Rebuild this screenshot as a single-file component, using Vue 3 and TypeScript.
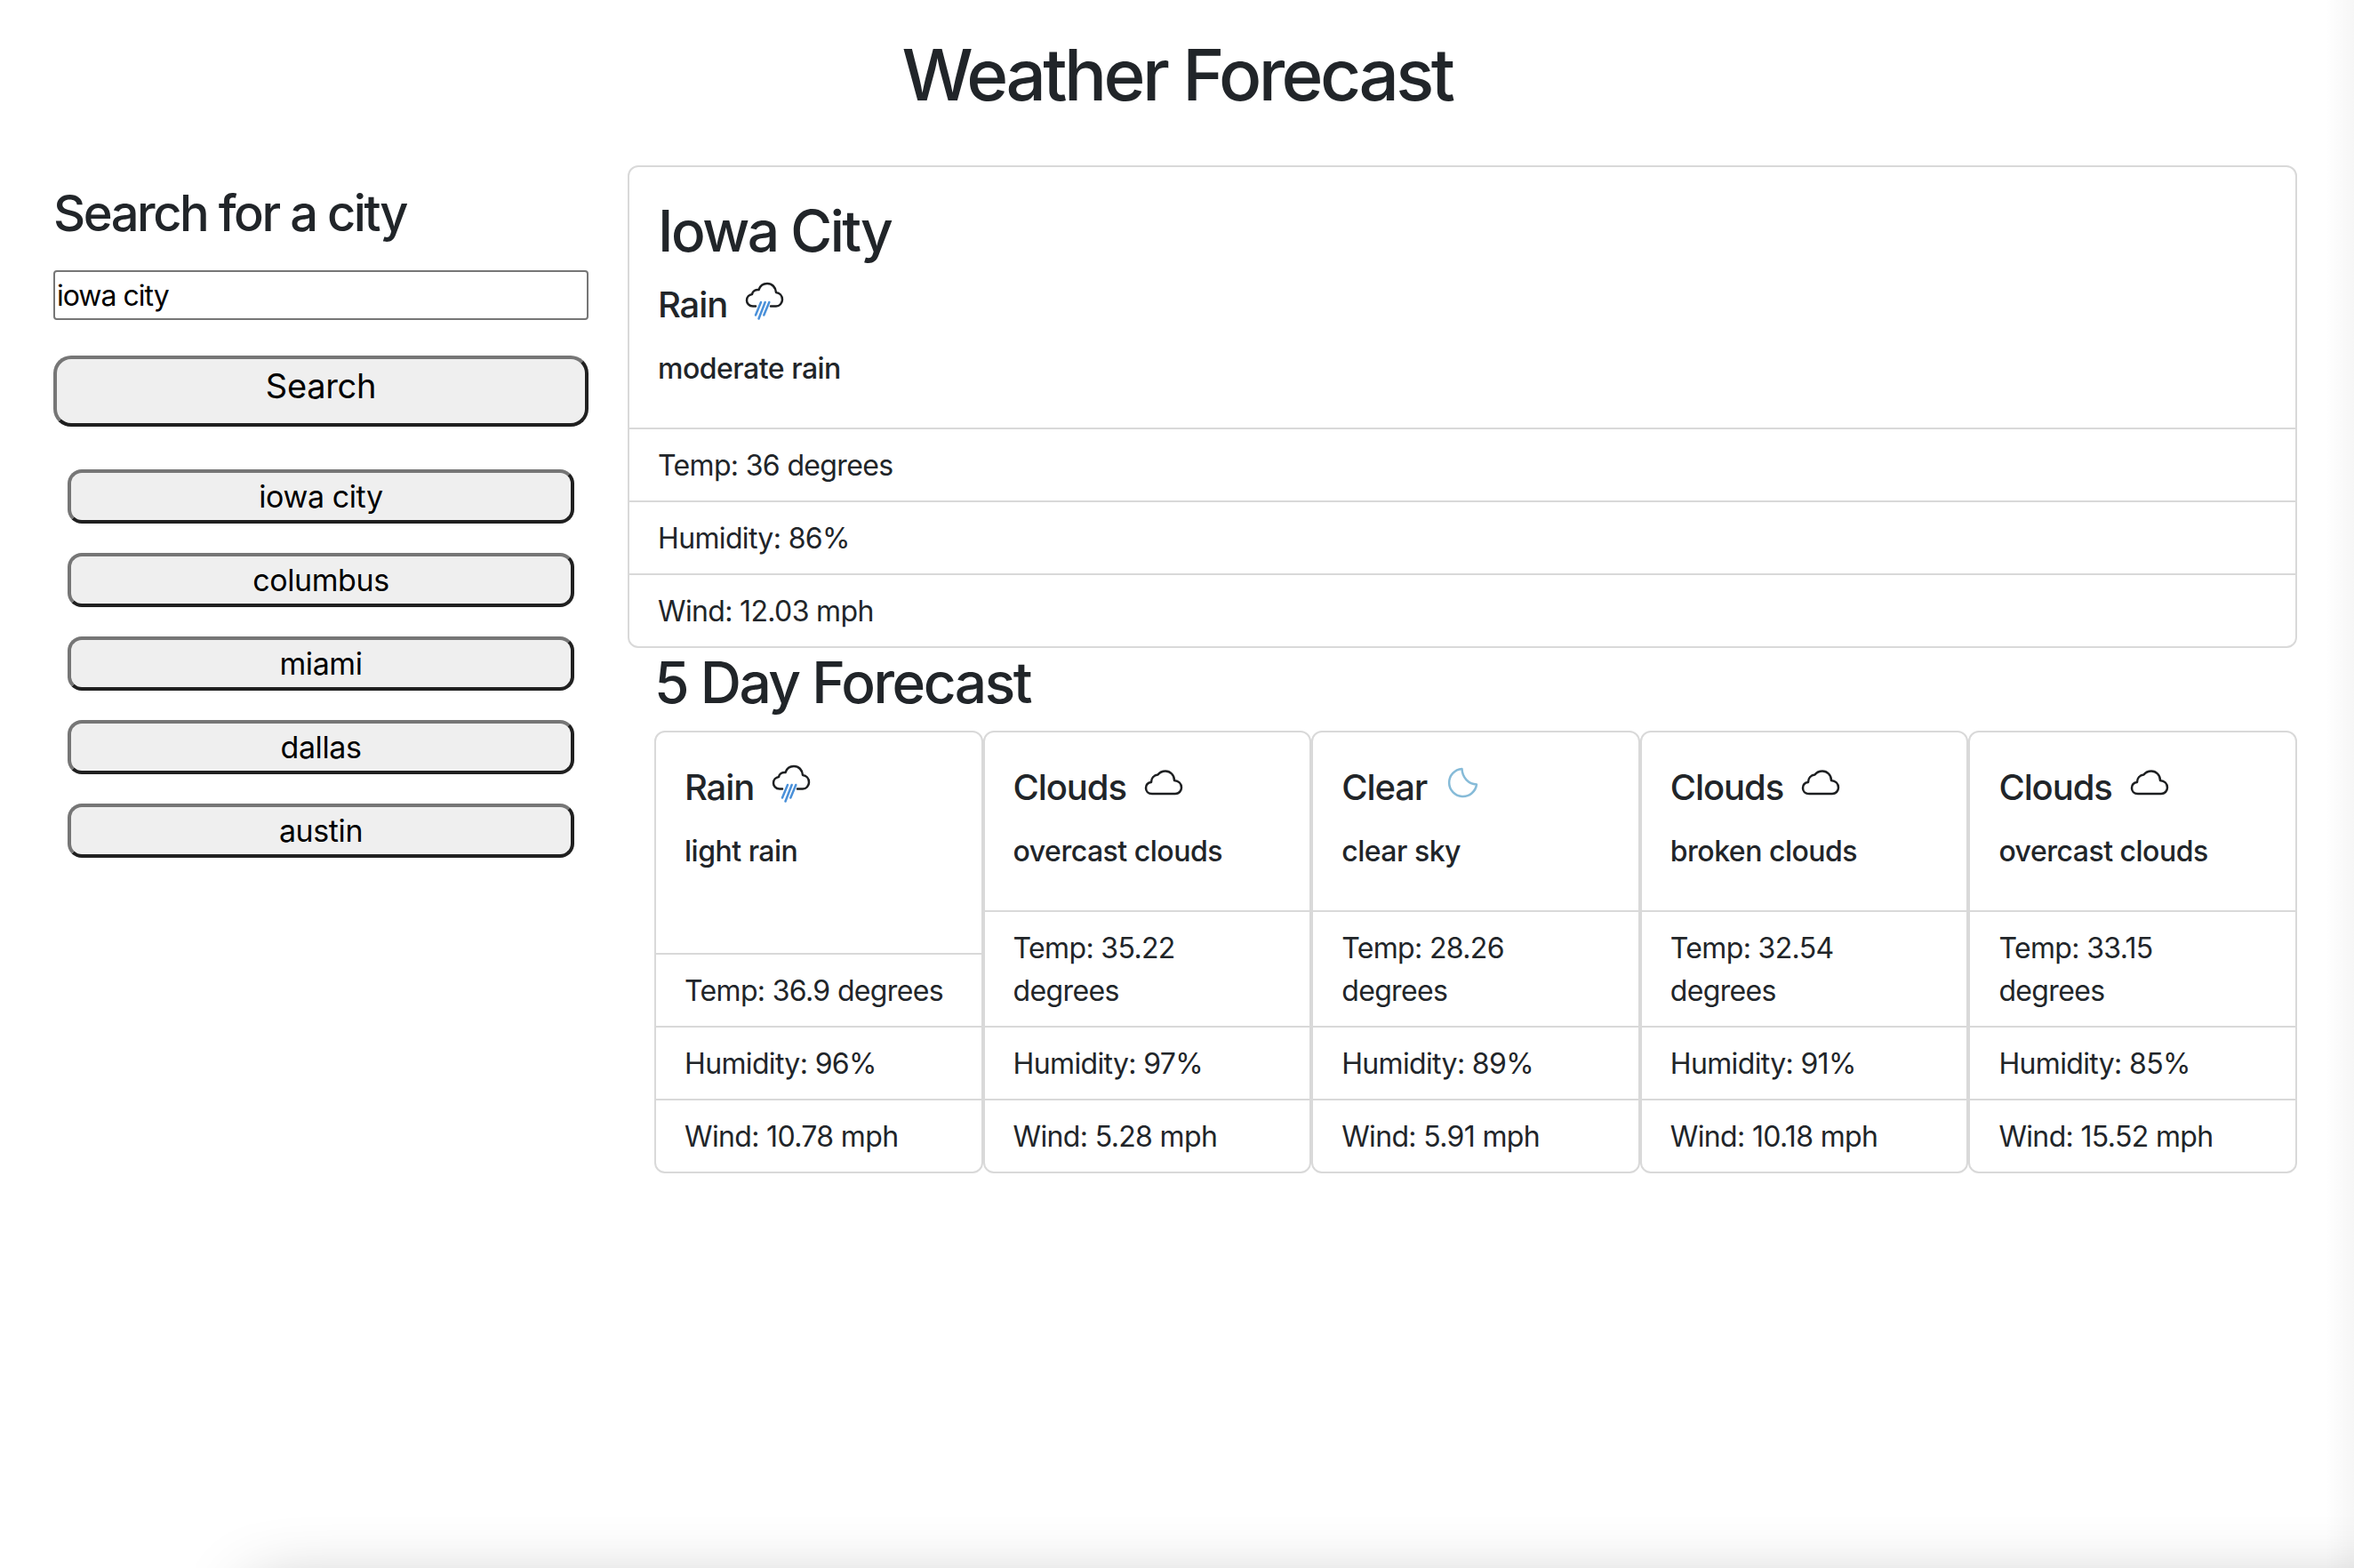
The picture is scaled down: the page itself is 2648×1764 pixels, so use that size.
<template>
  <div class="page">
    <h1 class="page-title">Weather Forecast</h1>
    <div class="layout">
      <aside class="sidebar">
        <h3 class="search-title">Search for a city</h3>
        <input v-model="query" class="search-input" type="text">
        <button class="btn-search">Search</button>
        <div class="history">
          <button v-for="city in history" :key="city" class="btn-city">{{ city }}</button>
        </div>
      </aside>

      <main class="content">
        <section class="card today">
          <div class="card-body">
            <h2 class="city-name">Iowa City</h2>
            <div class="condition">
              <span>{{ today.main }}</span>
              <svg class="wx-icon" viewBox="0 0 48 48" fill="none">
                <path v-for="p in icons[today.main]" :key="p.d" :d="p.d" :stroke="p.stroke" />
              </svg>
            </div>
            <h6 class="desc">{{ today.desc }}</h6>
          </div>
          <ul class="list">
            <li>Temp: {{ today.temp }} degrees</li>
            <li>Humidity: {{ today.humidity }}%</li>
            <li>Wind: {{ today.wind }} mph</li>
          </ul>
        </section>

        <h2 class="forecast-title">5 Day Forecast</h2>
        <div class="forecast">
          <section v-for="day in forecast" :key="day.temp" class="card day">
            <div class="card-body">
              <div class="condition">
                <span>{{ day.main }}</span>
                <svg class="wx-icon" viewBox="0 0 48 48" fill="none">
                  <path v-for="p in icons[day.main]" :key="p.d" :d="p.d" :stroke="p.stroke" />
                </svg>
              </div>
              <h6 class="desc">{{ day.desc }}</h6>
            </div>
            <ul class="list">
              <li>Temp: {{ day.temp }} degrees</li>
              <li>Humidity: {{ day.humidity }}%</li>
              <li>Wind: {{ day.wind }} mph</li>
            </ul>
          </section>
        </div>
      </main>
    </div>
    <div class="window-shadow"></div>
    <div class="window-edge"></div>
  </div>
</template>

<script setup lang="ts">
import { ref } from 'vue'

interface Weather {
  main: string
  desc: string
  temp: number | string
  humidity: number
  wind: number | string
}

const query = ref('iowa city')
const history = ['iowa city', 'columbus', 'miami', 'dallas', 'austin']

const today: Weather = { main: 'Rain', desc: 'moderate rain', temp: 36, humidity: 86, wind: '12.03' }

const forecast: Weather[] = [
  { main: 'Rain', desc: 'light rain', temp: '36.9', humidity: 96, wind: '10.78' },
  { main: 'Clouds', desc: 'overcast clouds', temp: '35.22', humidity: 97, wind: '5.28' },
  { main: 'Clear', desc: 'clear sky', temp: '28.26', humidity: 89, wind: '5.91' },
  { main: 'Clouds', desc: 'broken clouds', temp: '32.54', humidity: 91, wind: '10.18' },
  { main: 'Clouds', desc: 'overcast clouds', temp: '33.15', humidity: 85, wind: '15.52' }
]

const icons: Record<string, { d: string; stroke: string }[]> = {
  Rain: [
    {
      d: 'M15 31.5H12C7.5 31.5 5 28 5 25C5 21 8 18.5 11 18C11.5 14.5 15 12.5 18.5 13C20 8.5 24 6 28 6C33.5 6 37.5 10 38 16C42 16.5 45 19.5 45 24C45 28 42 31.5 38 31.5H32',
      stroke: '#1d1f21'
    },
    { d: 'M21 27L15 41.5', stroke: '#4a90d9' },
    { d: 'M25.7 27L18.5 45.5', stroke: '#4a90d9' },
    { d: 'M30.3 27L24.3 41.5', stroke: '#4a90d9' }
  ],
  Clouds: [
    {
      d: 'M12 37C7.5 37 5 34 5 30.5C5 27 7.5 24.5 11 24C11 19.5 14 16 18.5 15.5C20.5 13 24 11.5 27 11.5C32.5 11.5 37 16 37 22C42 22.5 45 26 45 30C45 34 42 37 38 37Z',
      stroke: '#1d1f21'
    }
  ],
  Clear: [
    { d: 'M22.5 9A15.5 15.5 0 1 0 39 26.5C30 26 23 19 22.5 9Z', stroke: '#86bbd8' }
  ]
}
</script>

<style>
html,
body {
  margin: 0;
  background: #fff;
}
</style>

<style scoped>
.page {
  height: 1764px;
  overflow: hidden;
  position: relative;
  box-sizing: border-box;
  padding-top: 36px;
  font-family: Inter, "Liberation Sans", sans-serif;
  color: #212529;
  font-size: 32px;
  line-height: 48px;
  letter-spacing: -0.65px;
}

.page-title {
  margin: 0 0 54px;
  text-align: center;
  font-size: 80px;
  font-weight: 500;
  line-height: 96px;
  letter-spacing: -3.55px;
}

.layout {
  display: flex;
  padding-right: 64px;
}

.sidebar {
  width: 602px;
  margin: 0 44px 0 60px;
  flex: none;
  display: flex;
  flex-direction: column;
  padding-top: 21px;
}

.search-title {
  margin: 0 0 30px;
  font-size: 56px;
  font-weight: 500;
  line-height: 67px;
  letter-spacing: -2.45px;
}

.search-input {
  box-sizing: border-box;
  width: 100%;
  height: 56px;
  padding: 0 2px;
  border: 2px solid #767676;
  border-radius: 4px;
  font: 32px Inter, "Liberation Sans", sans-serif;
  letter-spacing: -1px;
  color: #000;
  outline: none;
}

.btn-search,
.btn-city {
  box-sizing: border-box;
  border-width: 4px;
  border-style: solid;
  border-color: #767676 #202020 #202020 #767676;
  background: #efefef;
  color: #000;
  font-family: Inter, "Liberation Sans", sans-serif;
  padding: 0;
}

.btn-search {
  width: 100%;
  height: 80px;
  margin-top: 40px;
  padding-bottom: 12px;
  border-radius: 20px;
  font-size: 38px;
  letter-spacing: -0.3px;
}

.history {
  display: flex;
  flex-direction: column;
  gap: 33px;
  padding: 48px 16px 0;
}

.btn-city {
  height: 61px;
  border-radius: 16px;
  font-size: 34px;
  letter-spacing: -0.4px;
}

.content {
  flex: 1;
  min-width: 0;
}

.card {
  box-sizing: border-box;
  border: 2px solid #d9d9d9;
  border-radius: 12px;
  display: flex;
  flex-direction: column;
  background: #fff;
}

.card-body {
  flex: 1;
  padding: 32px;
}

.city-name {
  margin: 0 0 16px;
  font-size: 64px;
  font-weight: 500;
  line-height: 79px;
  height: 77px;
  letter-spacing: -2.45px;
}

.condition {
  display: flex;
  gap: 17px;
  height: 66px;
  margin-bottom: 16px;
  font-size: 40px;
  font-weight: 500;
  line-height: 60px;
  letter-spacing: -1.1px;
}

.wx-icon {
  width: 48px;
  height: 48px;
  stroke-width: 2.5;
  stroke-linecap: round;
  stroke-linejoin: round;
}

.desc {
  margin: 0 0 16px;
  font-size: 32px;
  font-weight: 500;
  line-height: 40px;
  height: 38px;
  letter-spacing: -0.5px;
}

.list {
  list-style: none;
  margin: 0;
  padding: 0;
}

.list li {
  padding: 17px 36px 15px 32px;
  border-top: 2px solid #d9d9d9;
}

.forecast-title {
  margin: 0 0 16px 30px;
  font-size: 64px;
  font-weight: 500;
  line-height: 77px;
  letter-spacing: -2.45px;
}

.forecast {
  display: grid;
  grid-template-columns: repeat(5, 1fr);
  margin-left: 30px;
}

/* macOS window shadow along the bottom and right of the capture */
.window-shadow {
  position: absolute;
  left: 285px;
  right: -60px;
  top: 1790px;
  height: 100px;
  box-shadow: 0 0 80px rgba(0, 0, 0, 0.3);
}

.window-edge {
  position: absolute;
  top: 0;
  right: 0;
  bottom: 0;
  width: 32px;
  background: linear-gradient(to right, rgba(0, 0, 0, 0), rgba(0, 0, 0, 0.035));
}
</style>
